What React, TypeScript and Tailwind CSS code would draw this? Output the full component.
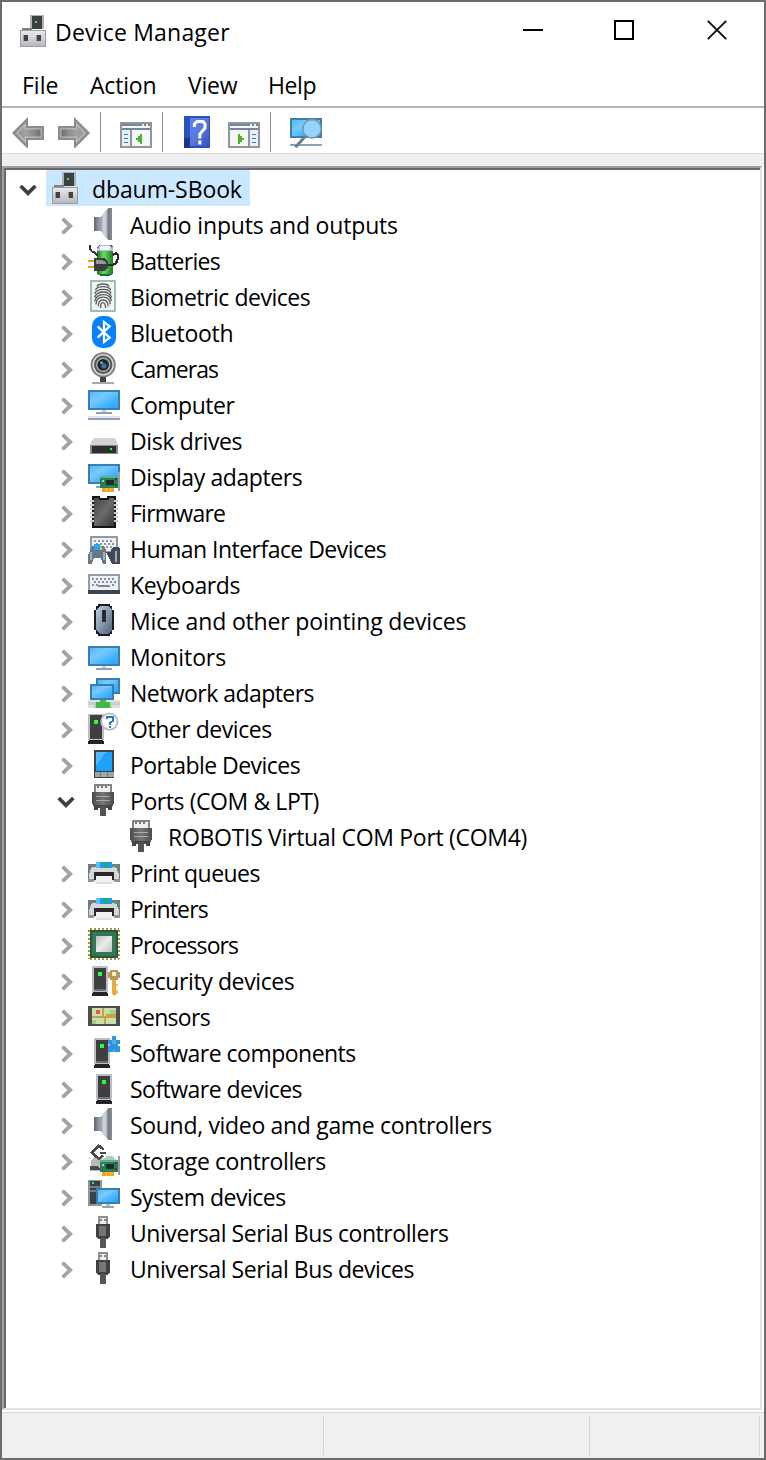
import React from "react";

type Draw = () => React.ReactElement;

function Icon({ children, className = "" }: { children: React.ReactNode; className?: string }) {
  return (
    <svg viewBox="0 0 16 16" className={"h-8 w-8 shrink-0 " + className} shapeRendering="crispEdges">
      {children}
    </svg>
  );
}

function Gradients() {
  return (
    <svg className="absolute h-0 w-0" aria-hidden="true">
      <defs>
        <linearGradient id="screen" x1="0" y1="0" x2="1" y2="1">
          <stop offset="0" stopColor="#55b5f8" />
          <stop offset="0.35" stopColor="#78caff" />
          <stop offset="0.65" stopColor="#49b5ff" />
          <stop offset="1" stopColor="#2ba5fb" />
        </linearGradient>
        <linearGradient id="cone" x1="0" y1="0" x2="1" y2="0">
          <stop offset="0" stopColor="#8a929c" />
          <stop offset="0.35" stopColor="#dadde0" />
          <stop offset="0.6" stopColor="#a9aeb5" />
          <stop offset="0.66" stopColor="#737982" />
          <stop offset="1" stopColor="#858b94" />
        </linearGradient>
        <linearGradient id="coneBack" x1="0" y1="0" x2="1" y2="0">
          <stop offset="0" stopColor="#566476" />
          <stop offset="1" stopColor="#b4bcc6" />
        </linearGradient>
        <linearGradient id="mouse" x1="0" y1="0" x2="1" y2="1">
          <stop offset="0" stopColor="#c1d0e2" />
          <stop offset="1" stopColor="#50627a" />
        </linearGradient>
        <linearGradient id="plate" x1="0" y1="0" x2="0" y2="1">
          <stop offset="0" stopColor="#e9e9ec" />
          <stop offset="1" stopColor="#b9b9bd" />
        </linearGradient>
        <linearGradient id="silver" x1="0" y1="0" x2="1" y2="1">
          <stop offset="0" stopColor="#bdbdbd" />
          <stop offset="0.5" stopColor="#ececec" />
          <stop offset="1" stopColor="#c4c4c4" />
        </linearGradient>
        <linearGradient id="chip" x1="0" y1="0" x2="1" y2="1">
          <stop offset="0" stopColor="#454545" />
          <stop offset="0.5" stopColor="#6a6a6a" />
          <stop offset="1" stopColor="#383838" />
        </linearGradient>
        <linearGradient id="battery" x1="0" y1="0" x2="1" y2="0">
          <stop offset="0" stopColor="#1d7726" />
          <stop offset="0.4" stopColor="#62e35d" />
          <stop offset="1" stopColor="#1c7a21" />
        </linearGradient>
        <linearGradient id="help" x1="0" y1="0" x2="1" y2="1">
          <stop offset="0" stopColor="#5c84e8" />
          <stop offset="0.5" stopColor="#5a78dc" />
          <stop offset="1" stopColor="#2f4fc0" />
        </linearGradient>
        <linearGradient id="arrow" x1="0" y1="0" x2="1" y2="0">
          <stop offset="0" stopColor="#8d8d8d" />
          <stop offset="0.4" stopColor="#a2a2a2" />
          <stop offset="0.7" stopColor="#8b8b8b" />
          <stop offset="1" stopColor="#626262" />
        </linearGradient>
        <linearGradient id="port" x1="0" y1="0" x2="1" y2="0">
          <stop offset="0" stopColor="#4b4b4b" />
          <stop offset="0.5" stopColor="#777777" />
          <stop offset="1" stopColor="#4b4b4b" />
        </linearGradient>
      </defs>
    </svg>
  );
}

function Screen({ x, y, w, h }: { x: number; y: number; w: number; h: number }) {
  return (
    <>
      <rect x={x} y={y} width={w} height={h} fill="#3b7fa9" />
      <rect x={x + 1} y={y + 1} width={w - 2} height={h - 2} fill="url(#screen)" />
    </>
  );
}

function Tower({ x }: { x: number }) {
  return (
    <>
      <rect x={x} y="1" width="8" height="13" fill="#b9bfc4" />
      <rect x={x + 1} y="2" width="6" height="11" fill="#3f3f41" />
      <rect x={x + 1} y="12.5" width="6" height="1" fill="#6b7075" />
      <rect x={x + 3} y="4" width="2" height="2" fill="#2bff3a" />
      <path d={`M${x + 0.7} 14h6.6l.9 1.2v.8h-8.4v-.8z`} fill="#242424" />
    </>
  );
}

function Card() {
  return (
    <>
      <rect x="6" y="8" width="9" height="6" fill="#2c7c57" />
      <rect x="6" y="8" width="9" height="1" fill="#5fae8b" />
      <rect x="9" y="10" width="4" height="2.5" fill="#222b28" />
      <rect x="7" y="10" width="1" height="1" fill="#9cd6b9" />
      <rect x="13.5" y="9" width="1" height="1" fill="#1d5039" />
      <rect x="13.5" y="12" width="1" height="1" fill="#1d5039" />
      <rect x="7" y="14" width="6" height="2" fill="#f3a416" />
      <path d="M9.25 14v2M11.25 14v2" stroke="#fbc64a" strokeWidth=".5" />
      <rect x="15" y="6" width="1" height="9.5" fill="#9a9ea1" />
    </>
  );
}

const DeviceRoot: Draw = () => (
  <Icon>
    <rect x="6" y="0" width="7" height="7" fill="#aeb4b6" />
    <rect x="7" y="0.5" width="5" height="6.5" fill="#3e4143" />
    <rect x="8.5" y="3" width="1" height="1" fill="#36ed45" />
    <path d="M2 6.5h5V8H2z" fill="#7f8284" />
    <rect x="1" y="7.5" width="13" height="8.5" fill="#9c9da0" />
    <rect x="1.5" y="8" width="12" height="7.5" fill="url(#plate)" />
    <rect x="3" y="10" width="2" height="3" fill="#404245" />
    <rect x="9.5" y="10" width="2" height="3" fill="#404245" />
    <path d="M2.5 10H3v3h-.5zM9 10h.5v3H9z" fill="#999b9e" />
  </Icon>
);

const Speaker: Draw = () => (
  <Icon>
    <rect x="3" y="4.5" width="4" height="7" fill="url(#coneBack)" />
    <path d="M6 4.8 10 0H12v16h-2L6 11.2z" fill="url(#cone)" />
  </Icon>
);

const Battery: Draw = () => (
  <Icon>
    <rect x="4.5" y="0.5" width="8.2" height="15.3" rx="2" fill="#2f6a36" />
    <rect x="4.7" y="3.5" width="7.8" height="11.5" rx="1" fill="url(#battery)" />
    <path d="M4.5 3.7V2L6.2.4h4.6L12.6 2v1.7z" fill="#b9b9dc" />
    <path d="M6 1h5v2H6z" fill="#f4f4ff" />
    <path d="M1 .6v2l1 1.2 1.4.5 1.4 1.7" fill="none" stroke="#333" strokeWidth="1" />
    <path d="M9 10.5h3.4l1.6-1 .9-2V5.4l-1-.8-1.6.9" fill="none" stroke="#2a2a2a" strokeWidth="1.2" />
    <path d="M0 8.5h4M0 11.5h4" stroke="#e4a320" strokeWidth="1" />
    <path d="M3 7h5l2 1.7v3L8 13.5H3z" fill="#3d3d3d" />
    <path d="M4 8h3l2 1v1H4z" fill="#979797" />
  </Icon>
);

const Fingerprint: Draw = () => (
  <Icon>
    <rect x="1" y="0" width="13" height="16" fill="#9dbdb5" />
    <rect x="2" y="1" width="11" height="14" fill="#f2f4f3" />
    <g fill="none" stroke="#565b5b" strokeWidth=".65" shapeRendering="auto">
      <path d="M4.5 3.2Q5 2 7.5 2t3 1.2M3.7 5Q4.5 3.3 7.5 3.3T11.4 5" />
      <path d="M3.3 6.8Q4.4 4.7 7.6 4.7t4 2M3.2 8.7Q4.5 6 7.6 6t4.2 2.7M3.3 10.7Q4 7.4 7.5 7.3t4.2 3.1" />
      <path d="M4 12.2q0-3.6 3.5-3.6t3.6 3.5M5.2 13.2Q5 10 7.5 10t2.6 3.3M6.4 14q-.3-2.7 1-2.7T8.8 14" />
    </g>
  </Icon>
);

const Bluetooth: Draw = () => (
  <Icon>
    <rect x="2" y="0" width="12" height="16" rx="5" fill="#0782fb" shapeRendering="auto" />
    <path d="m4.8 5.2 6 5.6L8 13V3l2.8 2.2-6 5.6" fill="none" stroke="#fff" strokeWidth="1.1" shapeRendering="auto" />
  </Icon>
);

const Camera: Draw = () => (
  <Icon>
    <g shapeRendering="auto">
      <circle cx="7.6" cy="6.4" r="6.3" fill="#7d7d7d" />
      <circle cx="7.6" cy="6.4" r="5.4" fill="#d4d4d4" />
      <circle cx="7.6" cy="6.4" r="4.6" fill="#555" />
      <circle cx="7.6" cy="6.4" r="3.6" fill="#adadad" />
      <circle cx="7.6" cy="6.4" r="2.9" fill="#1e2633" />
      <circle cx="8" cy="7" r="1.3" fill="#3f6fa8" />
      <circle cx="6.8" cy="5.4" r=".7" fill="#9aaec5" />
    </g>
    <path d="M6 12.5h3V15H6z" fill="#444" />
    <rect x="2" y="15" width="11" height="1" fill="#a9a9a9" />
  </Icon>
);

const Computer: Draw = () => (
  <Icon>
    <Screen x={0} y={1} w={16} h={10} />
    <path d="M7 11h2v1H7z" fill="#c2ccd8" />
    <path d="M4 12h8v1H4z" fill="#8da2ba" />
    <path d="M0 14h16v1H0z" fill="#e1e6ec" />
    <path d="M0 15h16v1H0z" fill="#8da2ba" />
  </Icon>
);

const Disk: Draw = () => (
  <Icon>
    <path d="M3 7h10l1 1 1 2.5H1L2 8z" fill="#d3d3d3" />
    <rect x="1" y="10.5" width="14" height="4.5" fill="#8b8b8b" />
    <rect x="2" y="11" width="12" height="3.5" fill="#2d2d2d" />
    <rect x="11" y="12" width="1" height="1" fill="#2bf83b" />
  </Icon>
);

const Display: Draw = () => (
  <Icon>
    <Screen x={0} y={2} w={16} h={10} />
    <path d="M4 13h4v1H4z" fill="#8da2ba" />
    <Card />
  </Icon>
);

const Chip: Draw = () => (
  <Icon>
    <path d="M2 0h4v1.5h3.5V0H14v16H2z" fill="#161616" />
    <path d="M1 2.5h14M1 4.5h14M1 6.5h14M1 8.5h14M1 10.5h14M1 12.5h14" stroke="#c9d1d8" strokeWidth="1" />
    <rect x="3" y="1" width="10" height="14" fill="url(#chip)" />
    <path d="M5.5 0h5v2h-5z" fill="#151515" />
    <path d="M6 0h3.5v1H6z" fill="#fff" />
  </Icon>
);

const Hid: Draw = () => (
  <Icon>
    <rect x="1" y="2" width="14" height="8" fill="#94999f" />
    <rect x="2" y="3" width="12" height="6.5" fill="#edf0f2" />
    <path d="M3 4.5h10M4 6h9M3 7.5h10" stroke="#9499a2" strokeWidth=".7" strokeDasharray="1 1" />
    <path d="M9 10h7v6h-4z" fill="#3d4856" />
    <rect x="11.7" y="7.5" width="4.3" height="8.5" rx="1.5" fill="#3f4957" />
    <path d="M13.5 9.5h1v5.5h-1z" fill="#a1aaba" />
    <path d="M2 7h6l1 2v6.8H7.4l-1-3H3l-1 3H.2V11z" fill="#66788b" />
    <path d="M1 10h1v4H1zM7.5 10h1v4h-1z" fill="#a5b2be" />
    <path d="M3 6h3v3H3z" fill="#2ca4f5" />
    <path d="M6 7h1v1H6z" fill="#76d33e" />
    <path d="M7 8h1v1H7z" fill="#f25a4b" />
    <path d="M6 8h1v1H6z" fill="#f8c42d" />
  </Icon>
);

const Keyboard: Draw = () => (
  <Icon>
    <rect x="0" y="3" width="16" height="8.5" fill="#969ba1" />
    <rect x="1" y="4" width="14" height="7" fill="#edf0f2" />
    <path d="M2 5.5h12M3 7h11M2 8.5h3M12 8.5h2" stroke="#898e97" strokeWidth=".9" strokeDasharray="1 1" />
    <path d="M5 9h6" stroke="#7f8590" strokeWidth=".8" />
    <rect x="0" y="11" width="16" height="2" fill="#3b4550" />
  </Icon>
);

const Mouse: Draw = () => (
  <Icon>
    <path d="M5 0h6v1h1v2h1v10h-1v2h-1v1H5v-1H4v-2H3V3h1V1h1z" fill="#181c21" />
    <path d="M6 1h4l2 2v10l-2 2H6l-2-2V3z" fill="url(#mouse)" />
    <path d="M7 3h2v6H7z" fill="#2a2d30" />
  </Icon>
);

const Monitor: Draw = () => (
  <Icon>
    <Screen x={0} y={3} w={16} h={10} />
    <path d="M7 13h2v1H7z" fill="#c6cfda" />
    <path d="M4 14h8v1H4z" fill="#8da2ba" />
  </Icon>
);

const Network: Draw = () => (
  <Icon>
    <Screen x={4} y={1} w={12} h={8} />
    <Screen x={1} y={4} w={12} h={8} />
    <path d="M0 12h16v4H0z" fill="#dfe1e1" />
    <path d="M0 13h16v1.5H0z" fill="#cbcdce" />
    <path d="M6 12h3v1h2v3H4v-3h2z" fill="#45b749" />
    <path d="M3 13h1v3H3zM11 13h1v3h-1z" fill="#a5dfa5" />
  </Icon>
);

const Unknown: Draw = () => (
  <Icon>
    <path d="M0 1h8v13H0z" fill="#b9bfc4" />
    <path d="M1 1.5h6v12H1z" fill="#3f3f41" />
    <path d="M3 4h2v2H3z" fill="#2bff3a" />
    <path d="M.5 14h7l.5 1v1H0v-1z" fill="#242424" />
    <circle cx="10.7" cy="4.8" r="4.1" fill="#fff" stroke="#b8bcbf" strokeWidth=".9" shapeRendering="auto" />
    <path d="M9.3 3.7V2.5h3v2l-1.5 1v.8M10.8 7v1" fill="none" stroke="#2878bd" strokeWidth="1" />
  </Icon>
);

const Tablet: Draw = () => (
  <Icon>
    <rect x="3" y="1" width="10" height="14" fill="#3e4348" />
    <rect x="4" y="2" width="8" height="9.5" fill="#1ba2fb" />
    <path d="M4 2h5L4 9z" fill="#54b9fc" />
    <path d="M3.5 12h9.3v2.5H3.5z" fill="#a0a4a8" />
    <path d="M6.25 12v2.5M9.75 12v2.5" stroke="#75797d" strokeWidth=".5" />
  </Icon>
);

const Port: Draw = () => (
  <Icon>
    <rect x="3" y="0" width="9" height="4.5" fill="#858585" />
    <rect x="4" y="1" width="7" height="3" fill="#eeeeee" />
    <path d="M5 1v1M7 1v1M9 1v1" stroke="#777" strokeWidth=".9" />
    <path d="M2 4h11v6h-.7v1H2.7v-1H2z" fill="url(#port)" />
    <path d="M4 6.25h7M4 8.25h7" stroke="#a8a8a8" strokeWidth=".5" />
    <path d="M3 10.5h9V13h-2v-1H5v1H3z" fill="#464646" />
    <path d="M6 11h3v5H6z" fill="#535353" />
  </Icon>
);

const Printer: Draw = () => (
  <Icon>
    <path d="M0 4h16v8H0z" fill="#707b83" />
    <path d="M2 5.5h12l1.5 3.5v3.5H.5V9z" fill="#d5d7d8" />
    <path d="M4 3h8v3H4z" fill="#2497f6" />
    <path d="M4 3h2v3H4z" fill="#5ec1f9" />
    <path d="M8 3h2v3H8z" fill="#15b464" />
    <path d="M13 5h1v1h-1z" fill="#28ea31" />
    <path d="M3 8h10v4h-1v-2H4v2H3z" fill="#292929" />
    <path d="M0 11.5h3V13H0zM13 11.5h3V13h-3z" fill="#8d9599" />
    <path d="M4 10h8v4H4z" fill="#f2f2f2" />
    <path d="M4 13h8v1H4z" fill="#dcdee0" />
  </Icon>
);

const Cpu: Draw = () => (
  <Icon>
    <path d="M1 .5h14.5M1 15.5h14.5" stroke="#ba8c38" strokeWidth="1" strokeDasharray="1 1" />
    <path d="M.5 1v14.5M15.5 1v14.5" stroke="#ba8c38" strokeWidth="1" strokeDasharray="1 1" />
    <rect x="1" y="1" width="14" height="14" fill="#225b43" />
    <rect x="2" y="2" width="12" height="12" fill="#387555" />
    <rect x="4" y="4" width="8" height="8" fill="url(#silver)" />
  </Icon>
);

const Security: Draw = () => (
  <Icon>
    <Tower x={2} />
    <path d="M11 3h4v1h1v3h-1v1h-4V7h-1V4h1z" fill="#b9965a" />
    <path d="M12 4h2v2h-2z" fill="#f7f0d8" />
    <path d="M12 8h2v7l-1 1-1-1z" fill="#e8ab39" />
    <path d="M14 10h1v1h-1zM14 13h1v2h-1z" fill="#e8bf70" />
  </Icon>
);

const Sensor: Draw = () => (
  <Icon>
    <rect x="0" y="3" width="16" height="10" rx=".7" fill="#4d4d4d" />
    <path d="M2 4h12v8H2z" fill="#c9dfad" />
    <path d="M2 10h2v2H2zM11 5h3v2h-3z" fill="#a7ce87" />
    <path d="M2 8.5h12M7.5 4v5M9 7.5h5M8.5 8v4" stroke="#c9a23a" strokeWidth=".9" />
    <path d="M4 5h2v2H4z" fill="#ed5260" />
  </Icon>
);

const Component: Draw = () => (
  <Icon>
    <Tower x={3} />
    <path d="M10 2h2V0h2v2h2v2h-1v1h1v3h-6V5h1V4h-1z" fill="#3093db" />
    <path d="M12 2h2v2h-2zM12.5 7h1v1h-1z" fill="#51ade9" />
  </Icon>
);

const Software: Draw = () => (
  <Icon>
    <Tower x={4} />
  </Icon>
);

const Storage: Draw = () => (
  <Icon>
    <path d="m1.5 8 2-1.5h4L6 12v1.6H1.2z" fill="#b9babb" />
    <path d="M1 11h4l2 2.2H1z" fill="#484b4d" />
    <path d="M7.8 2.8 5.4.8 2 4.3l3.4 3.2 2-1.7M6 4.5h3" fill="none" stroke="#494949" strokeWidth="1.2" />
    <path d="M9 6h3l2 2H7z" fill="#adcdbd" />
    <Card />
  </Icon>
);

const System: Draw = () => (
  <Icon>
    <path d="M0 0h7v13H0z" fill="#8d979f" />
    <path d="M1 .5h5V12H1z" fill="#3c4043" />
    <path d="M1 3.5h5M1 5.5h4" stroke="#777e83" strokeWidth=".7" />
    <path d="M2 1h1v1H2z" fill="#3bed43" />
    <Screen x={4} y={4} w={12} h={8} />
    <path d="M9 12h2v1H9z" fill="#b0bbc8" />
    <path d="M7 13h6v1H7z" fill="#91a5ba" />
  </Icon>
);

const Usb: Draw = () => (
  <Icon>
    <rect x="5" y="0" width="5" height="4" fill="#8e8e8e" />
    <rect x="6" y="1" width="3" height="3" fill="#eee" />
    <path d="M6 1.5h1v1H6zM8 1.5h1v1H8z" fill="#858585" />
    <path d="M4 4h7v6l-1 1.5H5L4 10z" fill="#414141" />
    <path d="M5.5 5H9v5H5.5z" fill="#757575" />
    <path d="M6 11h3v5H6z" fill="#555" />
  </Icon>
);

interface Device {
  label: string;
  icon: Draw;
  spacing: string;
  children?: string[];
}

const devices: Device[] = [
  { label: "Audio inputs and outputs", icon: Speaker, spacing: "tracking-[-0.17px]" },
  { label: "Batteries", icon: Battery, spacing: "tracking-[-0.65px]" },
  { label: "Biometric devices", icon: Fingerprint, spacing: "tracking-[-0.47px]" },
  { label: "Bluetooth", icon: Bluetooth, spacing: "tracking-[-0.28px]" },
  { label: "Cameras", icon: Camera, spacing: "tracking-[-0.93px]" },
  { label: "Computer", icon: Computer, spacing: "tracking-[-0.5px]" },
  { label: "Disk drives", icon: Disk, spacing: "tracking-[-0.36px]" },
  { label: "Display adapters", icon: Display, spacing: "tracking-[-0.4px]" },
  { label: "Firmware", icon: Chip, spacing: "tracking-[-0.75px]" },
  { label: "Human Interface Devices", icon: Hid, spacing: "tracking-[-0.53px]" },
  { label: "Keyboards", icon: Keyboard, spacing: "tracking-[-0.4px]" },
  { label: "Mice and other pointing devices", icon: Mouse, spacing: "tracking-[-0.16px]" },
  { label: "Monitors", icon: Monitor, spacing: "tracking-[-0.1px]" },
  { label: "Network adapters", icon: Network, spacing: "tracking-[-0.55px]" },
  { label: "Other devices", icon: Unknown, spacing: "tracking-[-0.46px]" },
  { label: "Portable Devices", icon: Tablet, spacing: "tracking-[-0.53px]" },
  { label: "Ports (COM & LPT)", icon: Port, spacing: "tracking-[-0.42px]", children: ["ROBOTIS Virtual COM Port (COM4)"] },
  { label: "Print queues", icon: Printer, spacing: "tracking-[-0.54px]" },
  { label: "Printers", icon: Printer, spacing: "tracking-[-0.85px]" },
  { label: "Processors", icon: Cpu, spacing: "tracking-[-0.9px]" },
  { label: "Security devices", icon: Security, spacing: "tracking-[-0.4px]" },
  { label: "Sensors", icon: Sensor, spacing: "tracking-[-0.7px]" },
  { label: "Software components", icon: Component, spacing: "tracking-[-0.52px]" },
  { label: "Software devices", icon: Software, spacing: "tracking-[-0.53px]" },
  { label: "Sound, video and game controllers", icon: Speaker, spacing: "tracking-[-0.32px]" },
  { label: "Storage controllers", icon: Storage, spacing: "tracking-[-0.4px]" },
  { label: "System devices", icon: System, spacing: "tracking-[-0.5px]" },
  { label: "Universal Serial Bus controllers", icon: Usb, spacing: "tracking-[-0.44px]" },
  { label: "Universal Serial Bus devices", icon: Usb, spacing: "tracking-[-0.44px]" },
];

function Chevron({ open = false }: { open?: boolean }) {
  return open ? (
    <svg viewBox="0 0 18 12" className="mt-1 h-3 w-[18px] shrink-0">
      <path d="m1.7 2 7.3 7.3L16.3 2" fill="none" stroke="#3f3f3f" strokeWidth="3.8" />
    </svg>
  ) : (
    <svg viewBox="0 0 12 18" className="mt-1 h-[18px] w-3 shrink-0">
      <path d="M1.5 1.7 9.2 9l-7.7 7.3" fill="none" stroke="#a5a5a5" strokeWidth="3.8" />
    </svg>
  );
}

function DeviceRow({ device }: { device: Device }) {
  const Drawing = device.icon;
  return (
    <li>
      <div className="flex h-9 items-center">
        <div className={device.children ? "flex w-[82px] pl-[51px]" : "flex w-[82px] pl-[55px]"}>
          <Chevron open={!!device.children} />
        </div>
        <Drawing />
        <span className={"pt-0.5 pl-2.5 " + device.spacing}>{device.label}</span>
      </div>
      {device.children?.map((name) => (
        <div key={name} className="flex h-9 items-center pl-[120px]">
          <Drawing />
          <span className="pt-0.5 pl-2.5 tracking-[-0.3px]">{name}</span>
        </div>
      ))}
    </li>
  );
}

function Pane({ flip = false }: { flip?: boolean }) {
  return (
    <Icon>
      <path d="M0 3h16v13H0z" fill="#90979c" />
      <path d="M1 4h14v11H1z" fill="#f5f6f7" />
      <path d="M1 4h14v1H1zM1 6h14v1H1z" fill="#74869b" />
      <path d="M11 4h1v1h-1zM13 4h1v1h-1z" fill="#e5eaf0" />
      <g transform={flip ? "translate(16 0) scale(-1 1)" : undefined}>
        <path d="M1 7h4v8H1z" fill="#e8eff8" />
        <path d="M5 7h1v8H5z" fill="#8d969d" />
        <path d="M2 9.25h2M2 11.25h2M2 13.25h2" stroke="#397cbe" strokeWidth=".9" />
        <path d="M11 9v5h-1v-1H9v-1H8v-1h1v-1h1V9z" fill="#50b42c" />
      </g>
    </Icon>
  );
}

function BackArrow({ flip = false }: { flip?: boolean }) {
  return (
    <Icon className={flip ? "-scale-x-100" : ""}>
      <path d="M.7 8.5 7.5 1.7v3.8h8v6h-8v3.8z" fill="url(#arrow)" stroke="#8b8b8b" strokeWidth="1" shapeRendering="auto" />
      <path d="m2.4 8.5 4.3-4.3v2.2h7.9v4.2H6.7v2.2z" fill="none" stroke="#bdbdbd" strokeWidth=".6" shapeRendering="auto" />
    </Icon>
  );
}

function Divider() {
  return <div className="h-10 w-px shrink-0 bg-[#8d8d8d]" />;
}

function Toolbar() {
  return (
    <div className="flex h-[46px] items-start border-b border-[#dcdcdc] bg-white pt-1">
      <div className="flex w-[98px] gap-[14px] pl-2.5 pt-1">
        <BackArrow />
        <BackArrow flip />
      </div>
      <Divider />
      <div className="flex w-[61px] pl-[19px] pt-1"><Pane /></div>
      <Divider />
      <div className="flex w-[107px] gap-[15px] pl-[18px] pt-1">
        <Icon>
          <path d="M1.5 0h13v16h-13z" fill="#2c50bd" />
          <path d="M4.5 1H14v14H4.5z" fill="url(#help)" />
          <path d="M1.5 11h3v5h-3z" fill="#1d3588" />
          <path d="M6.7 5.5V4L8 2.7h3L12 4v2L9.4 9v2.3M9.4 12.2v2" fill="none" stroke="#fff" strokeWidth="1.5" shapeRendering="auto" />
        </Icon>
        <Pane flip />
      </div>
      <Divider />
      <div className="flex pl-[19px] pt-1">
        <Icon>
          <Screen x={0} y={1} w={16} h={10} />
          <path d="M0 14h16v1H0z" fill="#8da2ba" />
          <path d="M7.6 10.2 2.7 15.6" stroke="#687d90" strokeWidth="1.5" shapeRendering="auto" />
          <circle cx="11" cy="6.4" r="4.6" fill="#91d5ff" stroke="#7d98aa" strokeWidth=".8" shapeRendering="auto" />
        </Icon>
      </div>
    </div>
  );
}

function TitleBar() {
  return (
    <header className="flex h-[62px] items-start bg-white pl-4">
      <div className="pt-[13px]"><DeviceRoot /></div>
      <h1 className="w-[416px] shrink-0 pl-[5px] pt-3 leading-9 tracking-[0.2px]">Device Manager</h1>
      <div className="flex pl-[57px] pt-[18px]">
        <svg viewBox="0 0 20 20" className="h-5 w-5" shapeRendering="crispEdges"><path d="M0 9h20v2H0z" /></svg>
        <svg viewBox="0 0 20 20" className="ml-[71px] h-5 w-5"><path d="M1 1h18v18H1z" fill="none" stroke="#000" strokeWidth="2" /></svg>
        <svg viewBox="0 0 20 20" className="ml-[73px] h-5 w-5"><path d="m.8.8 18.4 18.4M19.2.8.8 19.2" fill="none" stroke="#0b0d10" strokeWidth="1.9" /></svg>
      </div>
    </header>
  );
}

export default function App() {
  return (
    <div className="flex h-[1460px] w-[766px] flex-col border-2 border-[#6c6c6e] bg-[#f0f0f0] font-['Open_Sans',sans-serif] text-[23px] leading-9 text-black">
      <Gradients />
      <TitleBar />
      <nav className="flex h-11 items-start border-b-2 border-[#b3b3b3] bg-white pl-5 pt-[3px]">
        <span className="w-[68px]">File</span>
        <span className="w-[98px] tracking-[-0.2px]">Action</span>
        <span className="w-20 tracking-[-0.2px]">View</span>
        <span className="tracking-[-0.4px]">Help</span>
      </nav>
      <Toolbar />
      <div className="h-3 shrink-0" />
      <main className="flex grow border-r-2 border-b-2 border-white">
        <div className="flex grow border-t-2 border-r-2 border-b-2 border-l-2 border-t-[#9f9f9f] border-r-[#e3e3e3] border-b-[#e3e3e3] border-l-[#9f9f9f]">
          <div className="grow border-t-2 border-l-2 border-[#69696b] bg-white">
            <div className="flex h-9 items-center">
              <div className="flex w-10 pl-[13px]"><Chevron open /></div>
              <div className="flex h-9 w-[204px] items-center bg-[#cce8ff] pl-1">
                <DeviceRoot />
                <span className="pt-0.5 pl-2.5 tracking-[-0.1px]">dbaum-SBook</span>
              </div>
            </div>
            <ul>
              {devices.map((device) => <DeviceRow key={device.label} device={device} />)}
            </ul>
          </div>
        </div>
      </main>
      <footer className="flex h-[46px] shrink-0 border-t border-[#d6d6d6] bg-[#f0f0f0] py-[3px]">
        <div className="w-[322px] border-r border-[#d6d6d6]" />
        <div className="w-[266px] border-r border-[#d6d6d6]" />
        <div className="w-[170px] border-r border-[#d6d6d6]" />
      </footer>
    </div>
  );
}
